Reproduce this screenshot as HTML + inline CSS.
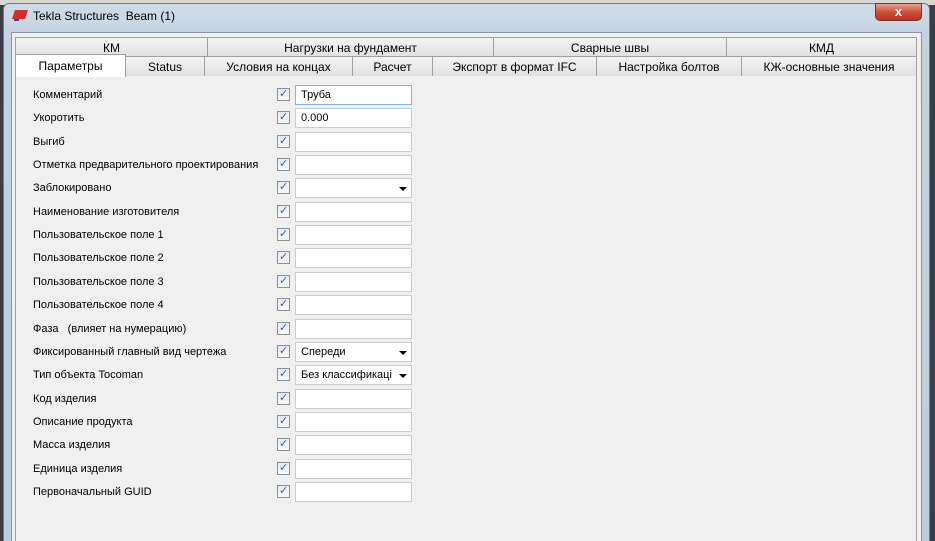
<!DOCTYPE html>
<html><head><meta charset="utf-8"><style>
html,body{margin:0;width:935px;height:541px;overflow:hidden}
body{background:#3a3d44;font-family:"Liberation Sans","DejaVu Sans",sans-serif;font-size:11px;color:#000;position:relative}
.abs{position:absolute}
#top{left:0;top:0;width:935px;height:5px;background:#d8d8d0}
#frame{left:3px;top:3px;width:925px;height:560px;background:linear-gradient(#cfdbe7,#c3d2e1 40px,#bccddd);border:1px solid #6b7c8e;border-radius:6px 6px 0 0}
#title{left:33px;top:9px;font-size:12px;color:#000}
#inner{left:11px;top:32px;width:909px;height:520px;background:#f0f0f0;border:1px solid #8a96a3}
.tab{position:absolute;height:20px;line-height:21px;text-align:center;background:linear-gradient(#f4f4f4,#e0e0e0);border:1px solid #a0a0a0;border-bottom:none;box-sizing:border-box;font-size:12px}
.sel{background:#fff;height:23px;z-index:2;line-height:23px}
#panel{left:15px;top:75px;width:902px;height:480px;background:#f0f0f0;border:1px solid #a0a0a0;box-sizing:border-box}
.lbl{position:absolute;left:33px;font-size:11px}
.cb{position:absolute;left:277px;width:11px;height:11px;border:1px solid #8e8f8f;background:linear-gradient(#e8ecf0,#f8f8f8)}
.cb:after{content:"✓";position:absolute;left:1px;top:-2px;font-size:11px;color:#3c5d9a;font-weight:bold}
.in{position:absolute;left:295px;width:117px;height:20px;background:#fff;border:1px solid #c9cdd2;box-sizing:border-box;padding-left:5px;line-height:18px;font-size:11px}
.dd:after{content:"";position:absolute;right:4px;top:8px;border:4px solid transparent;border-top:4px solid #000;border-bottom:none}
</style></head><body>
<div class="abs" id="top"></div>
<div class="abs" id="frame"></div>
<svg class="abs" style="left:12px;top:8px" width="18" height="14"><polygon points="3,2 16,2 13,11 0,11" fill="#d62b2b"/><rect x="2" y="11" width="5" height="2" fill="#2a4fa0"/></svg>
<div class="abs" id="title">Tekla Structures&nbsp; Beam (1)</div>
<div class="abs" style="left:875px;top:3px;width:47px;height:18px;border-radius:0 0 5px 5px;background:linear-gradient(#e8a393,#cf4f3a 50%,#b8321f);border:1px solid #6b3a35;box-sizing:border-box;color:#fff;text-align:center;font-weight:bold;font-size:13px;line-height:16px">x</div>
<div class="abs" id="inner"></div>
<div class="tab" style="left:15px;top:37px;width:193px">КМ</div>
<div class="tab" style="left:207px;top:37px;width:287px">Нагрузки на фундамент</div>
<div class="tab" style="left:493px;top:37px;width:234px">Сварные швы</div>
<div class="tab" style="left:726px;top:37px;width:191px">КМД</div>
<div class="abs" id="panel"></div>
<div class="tab sel" style="left:15px;top:54px;width:111px">Параметры</div>
<div class="tab" style="left:125px;top:56px;width:80px">Status</div>
<div class="tab" style="left:204px;top:56px;width:149px">Условия на концах</div>
<div class="tab" style="left:352px;top:56px;width:81px">Расчет</div>
<div class="tab" style="left:432px;top:56px;width:165px">Экспорт в формат IFC</div>
<div class="tab" style="left:596px;top:56px;width:146px">Настройка болтов</div>
<div class="tab" style="left:741px;top:56px;width:176px">КЖ-основные значения</div>
<div id="rows"></div>
<script>
var L=["Комментарий","Укоротить","Выгиб","Отметка предварительного проектирования","Заблокировано","Наименование изготовителя","Пользовательское поле 1","Пользовательское поле 2","Пользовательское поле 3","Пользовательское поле 4","Фаза &nbsp; (влияет на нумерацию)","Фиксированный главный вид чертежа","Тип объекта Tocoman","Код изделия","Описание продукта","Масса изделия","Единица изделия","Первоначальный GUID"];
var V={0:"Труба",1:"0.000",11:"Спереди",12:"Без классификаці"};var D={4:1,11:1,12:1};
var h="";for(var i=0;i<L.length;i++){var y=85+i*23.35;
h+='<div class="lbl" style="top:'+(y+4)+'px">'+L[i]+'</div><div class="cb" style="top:'+(y+3)+'px"></div><div class="in'+(D[i]?' dd':'')+'" style="top:'+y+'px'+(i==0?';border-color:#7eb4ea':'')+'">'+(V[i]||'')+'</div>';}
document.getElementById("rows").innerHTML=h;
</script>
</body></html>
